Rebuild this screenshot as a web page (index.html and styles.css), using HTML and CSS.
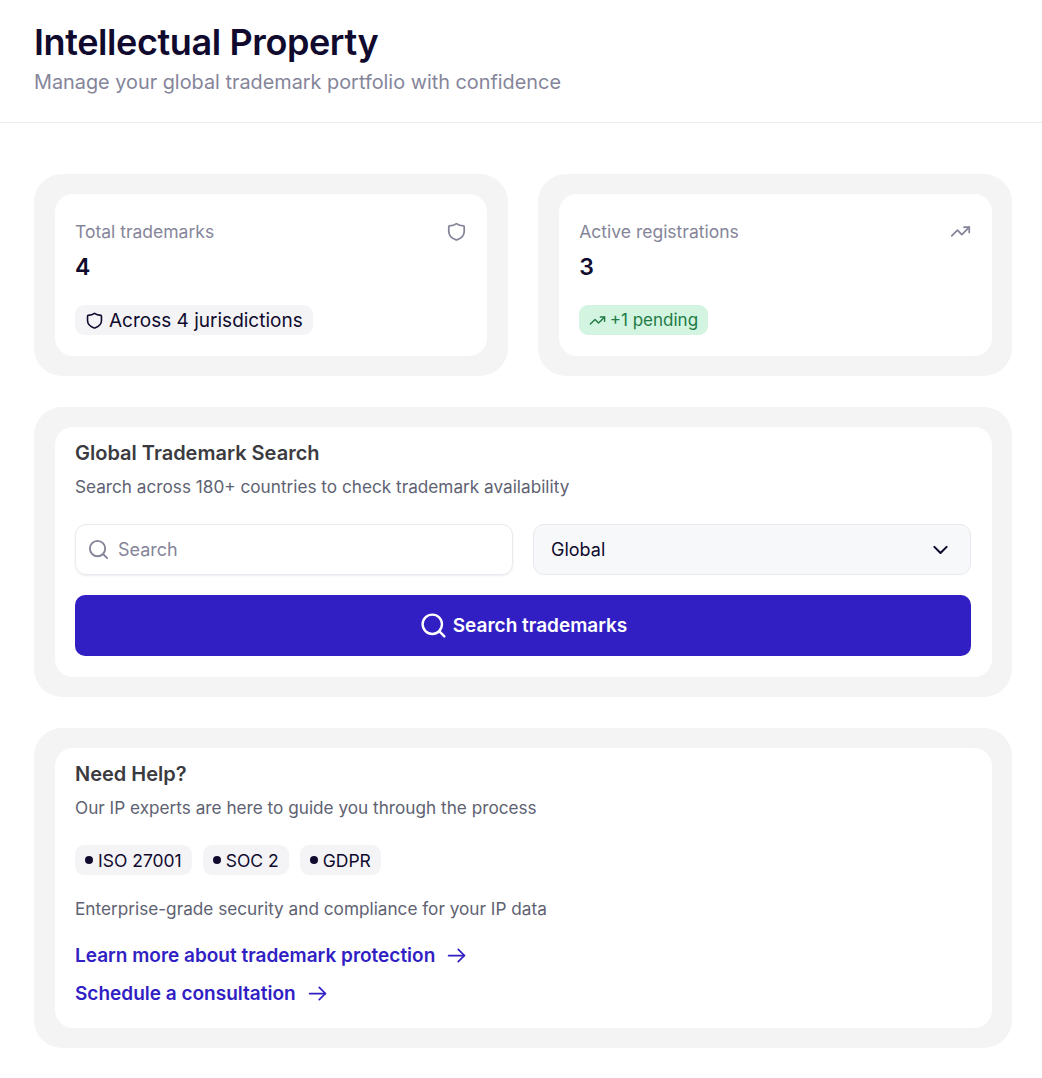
FILE: index.html
```html
<!DOCTYPE html>
<html lang="en">
<head>
    <meta charset="UTF-8">
    <meta name="viewport" content="width=device-width, initial-scale=1.0">
    <title>Intellectual Property</title>
    <link rel="stylesheet" href="styles.css">
</head>
<body>
    <header class="page-header">
        <h1>Intellectual Property</h1>
        <p>Manage your global trademark portfolio with confidence</p>
    </header>

    <main class="content">
        <div class="stats">
            <section class="card">
                <div class="card-inner stat">
                    <div class="stat-top">
                        <span class="stat-label">Total trademarks</span>
                        <svg class="stat-icon" width="21" height="21" viewBox="0 0 24 24"><path d="M12 3c2 1.6 5 2.5 8 2.5.6 0 .8.4.8 1V12c0 5-4 8-8.4 9.5a1.2 1.2 0 0 1-.8 0C7.2 20 3.2 17 3.2 12V6.5c0-.6.2-1 .8-1 3 0 6-.9 8-2.5z"/></svg>
                    </div>
                    <div class="stat-value">4</div>
                    <span class="badge">
                        <svg width="19" height="19" viewBox="0 0 24 24"><path d="M12 3c2 1.6 5 2.5 8 2.5.6 0 .8.4.8 1V12c0 5-4 8-8.4 9.5a1.2 1.2 0 0 1-.8 0C7.2 20 3.2 17 3.2 12V6.5c0-.6.2-1 .8-1 3 0 6-.9 8-2.5z"/></svg>
                        Across 4 jurisdictions
                    </span>
                </div>
            </section>
            <section class="card">
                <div class="card-inner stat">
                    <div class="stat-top">
                        <span class="stat-label">Active registrations</span>
                        <svg class="stat-icon" width="21" height="21" viewBox="0 0 24 24"><path d="M22 7l-8.5 8.5-5-5L2 17"/><path d="M16 7h6v6"/></svg>
                    </div>
                    <div class="stat-value">3</div>
                    <span class="badge badge-green">
                        <svg width="17" height="17" viewBox="0 0 24 24"><path d="M22 7l-8.5 8.5-5-5L2 17"/><path d="M16 7h6v6"/></svg>
                        +1 pending
                    </span>
                </div>
            </section>
        </div>

        <section class="card">
            <div class="card-inner search">
                <h2>Global Trademark Search</h2>
                <p class="sub">Search across 180+ countries to check trademark availability</p>
                <div class="search-row">
                    <div class="search-input">
                        <svg width="23" height="23" viewBox="0 0 24 24"><circle cx="11" cy="11" r="8"/><path d="M21 21l-4.3-4.3"/></svg>
                        <span>Search</span>
                    </div>
                    <div class="select">
                        <span>Global</span>
                        <svg class="chevron" width="21" height="21" viewBox="0 0 24 24"><path d="M5 9l7 7 7-7"/></svg>
                    </div>
                </div>
                <button class="search-btn">
                    <svg width="29" height="29" viewBox="0 0 24 24"><circle cx="11" cy="11" r="8"/><path d="M21 21l-4.3-4.3"/></svg>
                    Search trademarks
                </button>
            </div>
        </section>

        <section class="card">
            <div class="card-inner help">
                <h2>Need Help?</h2>
                <p class="sub">Our IP experts are here to guide you through the process</p>
                <div class="tags">
                    <span class="tag"><i class="dot"></i>ISO 27001</span>
                    <span class="tag"><i class="dot"></i>SOC 2</span>
                    <span class="tag"><i class="dot"></i>GDPR</span>
                </div>
                <p class="note">Enterprise-grade security and compliance for your IP data</p>
                <a class="link" href="#">Learn more about trademark protection
                    <svg width="21" height="21" viewBox="0 0 24 24"><path d="M3 12h18"/><path d="M14 5l7 7-7 7"/></svg>
                </a>
                <a class="link" href="#">Schedule a consultation
                    <svg width="21" height="21" viewBox="0 0 24 24"><path d="M3 12h18"/><path d="M14 5l7 7-7 7"/></svg>
                </a>
            </div>
        </section>
    </main>
</body>
</html>
```

FILE: styles.css
```css
body {
    margin: 0;
    font-family: Inter, "Liberation Sans", sans-serif;
    background-color: #fff;
    color: #0f0a2e;
}
svg {
    fill: none;
    stroke: currentColor;
    stroke-width: 2;
    stroke-linecap: round;
    stroke-linejoin: round;
    flex-shrink: 0;
}
.page-header {
    height: 123px;
    box-sizing: border-box;
    padding: 20px 34px 0;
    border-bottom: 1px solid #ececee;
}
.page-header h1 {
    margin: 0;
    font-size: 36px;
    line-height: 44px;
    font-weight: 600;
    letter-spacing: -0.4px;
}
.page-header p {
    margin: 4px 0 0;
    font-size: 19.85px;
    line-height: 28px;
    color: #85859a;
}
.content {
    padding: 51px 30px 30px 34px;
    display: flex;
    flex-direction: column;
    gap: 31px;
}
.stats {
    display: grid;
    grid-template-columns: 1fr 1fr;
    gap: 30.5px;
}
.card {
    background-color: #f4f4f4;
    border-radius: 28px;
    padding: 20px 20.5px;
}
.card-inner {
    background-color: #fff;
    border-radius: 18px;
    padding: 13px 20.5px 20px;
}
.stat {
    padding-top: 24px;
    height: 162px;
    box-sizing: border-box;
}
.search {
    padding-bottom: 21px;
}
.help {
    padding-bottom: 22px;
}
.stat-top {
    display: flex;
    justify-content: space-between;
    align-items: center;
    height: 26px;
}
.stat-label {
    font-size: 17.5px;
    color: #85859a;
}
.stat-icon {
    color: #85859a;
}
.stat-value {
    font-size: 23px;
    line-height: 30px;
    font-weight: 600;
    margin-top: 8px;
}
.badge {
    display: inline-flex;
    align-items: center;
    gap: 5px;
    height: 30px;
    margin-top: 23px;
    padding: 0 10px;
    border-radius: 9px;
    background-color: #f4f4f6;
    font-size: 19px;
}
.badge-green {
    background-color: #d3f4e0;
    color: #217a45;
    font-size: 17px;
    gap: 4px;
    padding: 0 10px 0 9.5px;
}
h2 {
    margin: 0;
    font-size: 20px;
    line-height: 26px;
    font-weight: 600;
    color: #3b3b3f;
}
.sub {
    margin: 9px 0 0;
    font-size: 17.2px;
    line-height: 24px;
    color: #5e6272;
}
.search-row {
    display: grid;
    grid-template-columns: 438px 1fr;
    gap: 20px;
    margin-top: 25px;
}
.search-input,
.select {
    height: 51px;
    box-sizing: border-box;
    display: flex;
    align-items: center;
    border: 1px solid #e9e9ef;
    border-radius: 11px;
    font-size: 18px;
}
.search-input {
    gap: 8px;
    padding: 0 11px;
    color: #85859a;
    box-shadow: 0 1px 2px rgba(15, 10, 46, 0.08);
}
.select {
    justify-content: space-between;
    padding: 0 19px 0 17px;
    background-color: #f7f8fa;
}
.chevron {
    stroke-width: 2.4;
}
.search-btn {
    width: 100%;
    height: 61px;
    margin-top: 20px;
    display: flex;
    align-items: center;
    justify-content: center;
    gap: 5px;
    border: none;
    border-radius: 10px;
    background-color: #311fc4;
    color: #fff;
    font-family: inherit;
    font-size: 19px;
    font-weight: 600;
}
.tags {
    display: flex;
    gap: 11px;
    margin-top: 25px;
}
.tag {
    display: inline-flex;
    align-items: center;
    gap: 5px;
    height: 30px;
    padding: 0 10px;
    border-radius: 9px;
    background-color: #f4f4f6;
    font-size: 17.5px;
}
.dot {
    width: 8px;
    height: 8px;
    border-radius: 50%;
    background-color: #0f0a2e;
}
.note {
    margin: 22px 0 0;
    font-size: 17.2px;
    line-height: 24px;
    color: #5e6272;
}
.link {
    display: flex;
    align-items: center;
    gap: 11px;
    margin-top: 12px;
    height: 26px;
    font-size: 19px;
    font-weight: 600;
    color: #311fc4;
    text-decoration: none;
}
.note + .link {
    margin-top: 21px;
}
```
